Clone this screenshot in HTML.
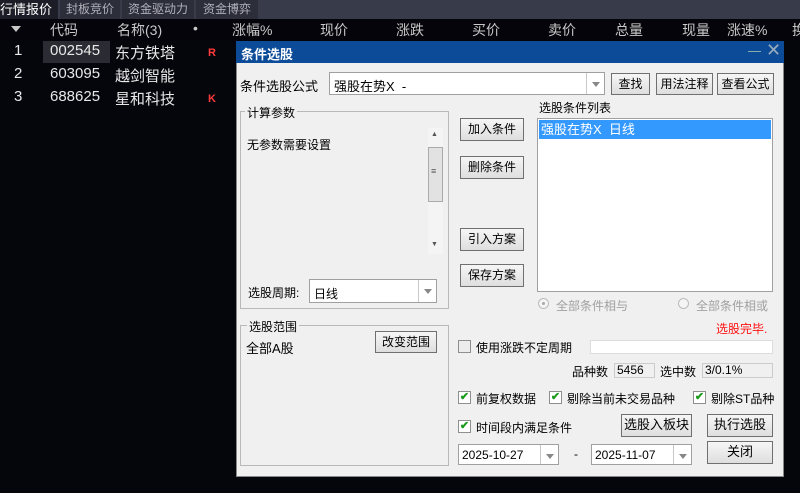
<!DOCTYPE html>
<html><head><meta charset="utf-8"><style>
*{margin:0;padding:0;box-sizing:border-box}
body{width:800px;height:493px;background:#05050c;position:relative;overflow:hidden;font-family:"Liberation Sans","Noto Sans CJK SC",sans-serif;font-size:12px}
.a{position:absolute;white-space:nowrap}
.h{color:#c8c8c8;font-size:14px;top:20px}
.r{color:#e8e8e8;font-size:15px}
.btn{position:absolute;background:linear-gradient(#f6f6f6,#dedede);border:1px solid #707070;text-align:center;color:#000;font-size:12px;line-height:20px}
.box{position:absolute;background:#fff;border:1px solid #a0a0a0}
.grp{position:absolute;border:1px solid #b8b8b8}
.lg{position:absolute;background:#f0f0f0;padding:0 2px;font-size:12px;color:#000}
.cb{position:absolute;width:13px;height:13px;border:1px solid #8e8f8f;background:#fff;color:#1a9a1a;font-size:11px;line-height:11px;text-align:center;font-weight:bold}
.t{position:absolute;color:#000;font-size:12px;white-space:nowrap}
.dd{position:absolute;right:0;top:0;bottom:0;width:18px;border-left:1px solid #c8c8c8}
.dd:after{content:"";position:absolute;left:5px;top:9px;border:4px solid transparent;border-top:5px solid #888}
</style></head><body>
<div class="a" style="left:0;top:0;width:800px;height:19px;background:#383b4a"></div>
<div class="a" style="left:0;top:0;width:58px;height:19px;background:#1c1d26;color:#fff;font-size:13px;line-height:19px">行情报价</div>
<div class="a" style="left:60px;top:0;width:60px;height:19px;background:#2c2e3a;color:#b0b0b8;font-size:12px;line-height:19px;text-align:center">封板竞价</div>
<div class="a" style="left:122px;top:0;width:72px;height:19px;background:#2c2e3a;color:#b0b0b8;font-size:12px;line-height:19px;text-align:center">资金驱动力</div>
<div class="a" style="left:196px;top:0;width:62px;height:19px;background:#2c2e3a;color:#b0b0b8;font-size:12px;line-height:19px;text-align:center">资金博弈</div>
<div class="a" style="left:0;top:19px;width:800px;height:22px;background:#04040a"></div>
<div class="a" style="left:11px;top:26px;border:5px solid transparent;border-top:6px solid #c8c8c8"></div>
<div class="a h" style="left:50px">代码</div><div class="a h" style="left:117px">名称(3)</div><div class="a h" style="left:193px">•</div>
<div class="a h" style="left:232px">涨幅%</div><div class="a h" style="left:320px">现价</div><div class="a h" style="left:396px">涨跌</div>
<div class="a h" style="left:472px">买价</div><div class="a h" style="left:548px">卖价</div><div class="a h" style="left:615px">总量</div>
<div class="a h" style="left:682px">现量</div><div class="a h" style="left:727px">涨速%</div><div class="a h" style="left:792px">换</div>
<div class="a" style="left:43px;top:41px;width:67px;height:22px;background:#2a2b33"></div>
<div class="a r" style="left:14px;top:42px">1</div><div class="a r" style="left:50px;top:42px">002545</div><div class="a r" style="left:115px;top:42px">东方铁塔</div><div class="a" style="left:208px;top:47px;color:#ff3a3a;font-weight:bold;font-size:11px">R</div>
<div class="a r" style="left:14px;top:65px">2</div><div class="a r" style="left:50px;top:65px">603095</div><div class="a r" style="left:115px;top:65px">越剑智能</div>
<div class="a r" style="left:14px;top:88px">3</div><div class="a r" style="left:50px;top:88px">688625</div><div class="a r" style="left:115px;top:88px">星和科技</div><div class="a" style="left:208px;top:93px;color:#ff3a3a;font-weight:bold;font-size:11px">K</div>

<div class="a" style="left:236px;top:41px;width:548px;height:436px;background:#f0f0f0;border:1px solid #888"></div>
<div class="a" style="left:236px;top:41px;width:548px;height:22px;background:#0c4b98"></div>
<div class="a" style="left:241px;top:44px;color:#fff;font-size:13px;font-weight:bold">条件选股</div>
<div class="a" style="left:748px;top:51px;width:13px;height:1px;background:#8aa"></div>
<div class="a" style="left:766px;top:40px;color:#9ab;font-size:18px">✕</div>

<div class="t" style="left:240px;top:76px;font-size:13px">条件选股公式</div>
<div class="box" style="left:329px;top:72px;width:276px;height:23px"><span class="t" style="left:4px;top:3px;font-size:13px">强股在势X&nbsp; -</span><div class="dd"></div></div>
<div class="btn" style="left:611px;top:73px;width:39px;height:22px">查找</div>
<div class="btn" style="left:656px;top:73px;width:57px;height:22px">用法注释</div>
<div class="btn" style="left:717px;top:73px;width:57px;height:22px">查看公式</div>

<div class="grp" style="left:240px;top:111px;width:209px;height:198px"></div>
<div class="lg" style="left:245px;top:104px">计算参数</div>
<div class="t" style="left:247px;top:136px">无参数需要设置</div>
<div class="a" style="left:428px;top:128px;width:15px;height:126px;background:#f4f4f4"></div>
<div class="a" style="left:428px;top:147px;width:15px;height:55px;background:#e2e2e2;border:1px solid #aaa"></div>
<div class="t" style="left:431px;top:166px;font-size:9px;color:#555">≡</div>
<div class="t" style="left:431px;top:131px;font-size:7px;color:#555">▲</div>
<div class="t" style="left:431px;top:241px;font-size:7px;color:#555">▼</div>
<div class="t" style="left:248px;top:284px">选股周期:</div>
<div class="box" style="left:309px;top:279px;width:128px;height:24px"><span class="t" style="left:4px;top:5px">日线</span><div class="dd"></div></div>

<div class="btn" style="left:460px;top:118px;width:64px;height:23px">加入条件</div>
<div class="btn" style="left:460px;top:156px;width:64px;height:23px">删除条件</div>
<div class="btn" style="left:460px;top:228px;width:64px;height:23px">引入方案</div>
<div class="btn" style="left:460px;top:264px;width:64px;height:23px">保存方案</div>

<div class="t" style="left:539px;top:99px">选股条件列表</div>
<div class="box" style="left:537px;top:118px;width:236px;height:174px"><div class="a" style="left:1px;top:1px;width:232px;height:19px;background:#3399ff;color:#fff;font-size:13px;padding-left:2px;line-height:19px">强股在势X&nbsp; 日线</div></div>
<div class="a" style="left:538px;top:298px;width:11px;height:11px;border-radius:50%;border:1px solid #bbb;background:#f4f4f4"></div>
<div class="a" style="left:542px;top:302px;width:3px;height:3px;border-radius:50%;background:#aaa"></div>
<div class="t" style="left:556px;top:297px;color:#a0a0a0">全部条件相与</div>
<div class="a" style="left:678px;top:298px;width:11px;height:11px;border-radius:50%;border:1px solid #bbb;background:#f4f4f4"></div>
<div class="t" style="left:696px;top:297px;color:#a0a0a0">全部条件相或</div>
<div class="t" style="left:716px;top:320px;color:#ff1010">选股完毕.</div>

<div class="grp" style="left:240px;top:325px;width:209px;height:141px"></div>
<div class="lg" style="left:247px;top:318px">选股范围</div>
<div class="t" style="left:246px;top:338px;font-size:13px">全部A股</div>
<div class="btn" style="left:375px;top:331px;width:62px;height:22px">改变范围</div>

<div class="cb" style="left:458px;top:340px;background:#ececec"></div>
<div class="t" style="left:476px;top:339px">使用涨跌不定周期</div>
<div class="a" style="left:590px;top:340px;width:183px;height:14px;background:#fff;border:1px solid #ddd"></div>
<div class="t" style="left:572px;top:363px">品种数</div>
<div class="a" style="left:614px;top:363px;width:41px;height:15px;border:1px solid #ccc;font-size:12px;padding-left:2px;line-height:13px">5456</div>
<div class="t" style="left:660px;top:363px">选中数</div>
<div class="a" style="left:702px;top:363px;width:71px;height:15px;border:1px solid #ccc;font-size:12px;padding-left:2px;line-height:13px">3/0.1%</div>

<div class="cb" style="left:458px;top:391px">✔</div><div class="t" style="left:476px;top:390px">前复权数据</div>
<div class="cb" style="left:549px;top:391px">✔</div><div class="t" style="left:567px;top:390px">剔除当前未交易品种</div>
<div class="cb" style="left:693px;top:391px">✔</div><div class="t" style="left:711px;top:390px">剔除ST品种</div>
<div class="cb" style="left:458px;top:420px">✔</div><div class="t" style="left:476px;top:419px">时间段内满足条件</div>
<div class="btn" style="left:621px;top:414px;width:71px;height:23px;font-size:13px">选股入板块</div>
<div class="btn" style="left:707px;top:414px;width:66px;height:23px;font-size:13px">执行选股</div>
<div class="btn" style="left:707px;top:441px;width:66px;height:23px;font-size:13px">关闭</div>
<div class="box" style="left:458px;top:444px;width:101px;height:21px"><span class="t" style="left:3px;top:3px">2025-10-27</span><div class="dd"></div></div>
<div class="t" style="left:574px;top:447px">-</div>
<div class="box" style="left:591px;top:444px;width:101px;height:21px"><span class="t" style="left:3px;top:3px">2025-11-07</span><div class="dd"></div></div>
</body></html>
